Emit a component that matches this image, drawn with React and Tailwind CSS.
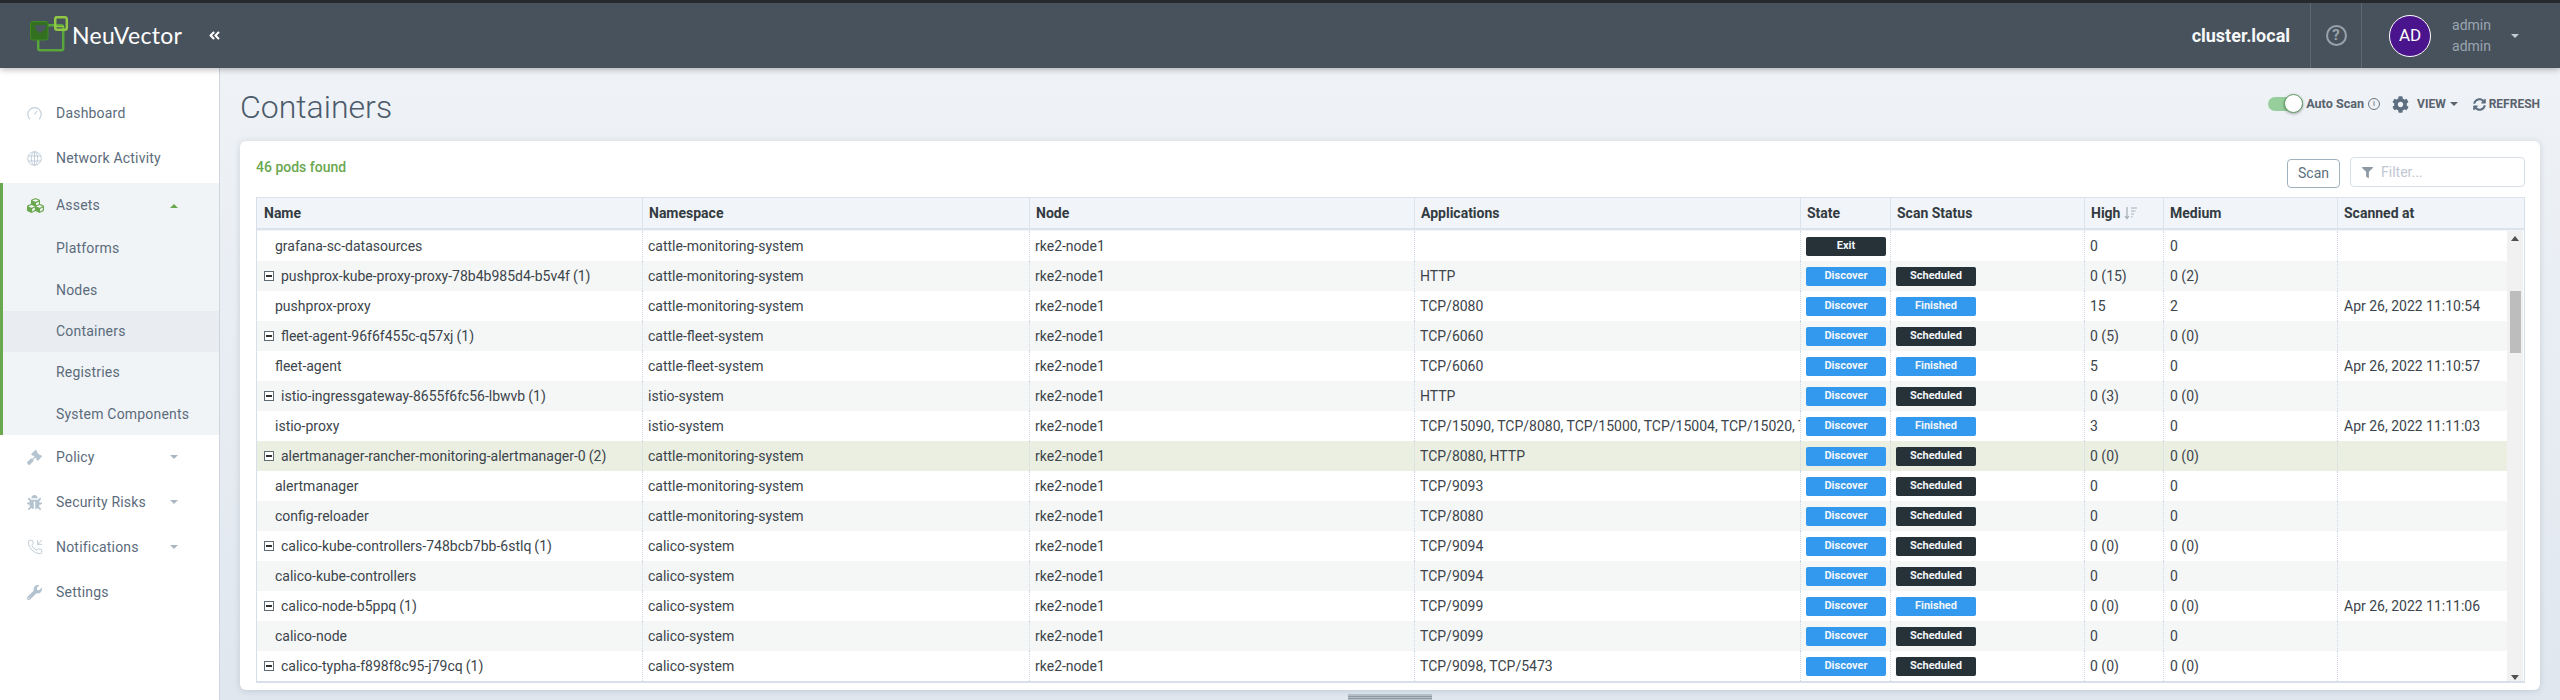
import React from "react";
import { FaCubes, FaGavel, FaBug, FaWrench, FaCog, FaSyncAlt, FaFilter, FaAngleDoubleLeft } from "react-icons/fa";
import { PhoneIncoming } from "lucide-react";

const MON = "cattle-monitoring-system";
const FLEET = "cattle-fleet-system";
const ISTIO = "istio-system";
const CAL = "calico-system";

const rows = [
  { name: "grafana-sc-datasources", ns: MON, app: "", state: "Exit", scan: "", high: "0", med: "0", at: "" },
  { name: "pushprox-kube-proxy-proxy-78b4b985d4-b5v4f", count: 1, ns: MON, app: "HTTP", state: "Discover", scan: "Scheduled", high: "0 (15)", med: "0 (2)", at: "" },
  { name: "pushprox-proxy", ns: MON, app: "TCP/8080", state: "Discover", scan: "Finished", high: "15", med: "2", at: "Apr 26, 2022 11:10:54" },
  { name: "fleet-agent-96f6f455c-q57xj", count: 1, ns: FLEET, app: "TCP/6060", state: "Discover", scan: "Scheduled", high: "0 (5)", med: "0 (0)", at: "" },
  { name: "fleet-agent", ns: FLEET, app: "TCP/6060", state: "Discover", scan: "Finished", high: "5", med: "0", at: "Apr 26, 2022 11:10:57" },
  { name: "istio-ingressgateway-8655f6fc56-lbwvb", count: 1, ns: ISTIO, app: "HTTP", state: "Discover", scan: "Scheduled", high: "0 (3)", med: "0 (0)", at: "" },
  { name: "istio-proxy", ns: ISTIO, app: "TCP/15090, TCP/8080, TCP/15000, TCP/15004, TCP/15020, TCP/15021", state: "Discover", scan: "Finished", high: "3", med: "0", at: "Apr 26, 2022 11:11:03" },
  { name: "alertmanager-rancher-monitoring-alertmanager-0", count: 2, ns: MON, app: "TCP/8080, HTTP", state: "Discover", scan: "Scheduled", high: "0 (0)", med: "0 (0)", at: "", selected: true },
  { name: "alertmanager", ns: MON, app: "TCP/9093", state: "Discover", scan: "Scheduled", high: "0", med: "0", at: "" },
  { name: "config-reloader", ns: MON, app: "TCP/8080", state: "Discover", scan: "Scheduled", high: "0", med: "0", at: "" },
  { name: "calico-kube-controllers-748bcb7bb-6stlq", count: 1, ns: CAL, app: "TCP/9094", state: "Discover", scan: "Scheduled", high: "0 (0)", med: "0 (0)", at: "" },
  { name: "calico-kube-controllers", ns: CAL, app: "TCP/9094", state: "Discover", scan: "Scheduled", high: "0", med: "0", at: "" },
  { name: "calico-node-b5ppq", count: 1, ns: CAL, app: "TCP/9099", state: "Discover", scan: "Finished", high: "0 (0)", med: "0 (0)", at: "Apr 26, 2022 11:11:06" },
  { name: "calico-node", ns: CAL, app: "TCP/9099", state: "Discover", scan: "Scheduled", high: "0", med: "0", at: "" },
  { name: "calico-typha-f898f8c95-j79cq", count: 1, ns: CAL, app: "TCP/9098, TCP/5473", state: "Discover", scan: "Scheduled", high: "0 (0)", med: "0 (0)", at: "" },
];

const COLS = "grid grid-cols-[385px_387px_385px_386px_90px_194px_79px_174px_170px]";

function Logo() {
  return (
    <svg width="40" height="36" viewBox="0 0 40 36" fill="none" className="-mt-[3px]">
      <rect x="9.2" y="9.2" width="25" height="25" rx="2" stroke="#58a63c" strokeWidth="2.5" />
      <rect x="1.500" y="5.500" width="17.500" height="18.500" rx="2" fill="#33701f" stroke="#3f8a26" />
      <path d="M6.500 9h10.500v3l-6 5.500-4.500-4.500z" fill="#4a5660" />
      <rect x="26.200" y="1.200" width="11.600" height="12.600" rx="2" stroke="#90c744" strokeWidth="2.5" />
      <path d="M25 10.500h10" stroke="#90c744" strokeWidth="1.500" />
    </svg>
  );
}

function GaugeIcon() {
  return (
    <svg width="15" height="15" viewBox="0 0 15 15" fill="none" stroke="#c3d0db" strokeWidth="1.2">
      <path d="M3 13.2A6.7 6.7 0 1 1 12 13.2" />
      <path d="M7.5 8.5L10 5" />
    </svg>
  );
}

function GlobeIcon() {
  return (
    <svg width="15" height="15" viewBox="0 0 15 15" fill="none" stroke="#c3d0db" strokeWidth="1">
      <circle cx="7.5" cy="7.5" r="6.8" />
      <ellipse cx="7.5" cy="7.5" rx="3.2" ry="6.8" />
      <path d="M1 5h13M1 10h13M7.5 1v13" />
    </svg>
  );
}

function SideItem({ icon, label, caret, active }) {
  return (
    <div className="flex h-[45px] items-center pl-[27px] pr-[41px] text-[#5b6b7b]">
      <span className="flex w-[29px] items-center text-[15px] text-[#b4c3d0]">{icon}</span>
      <span className="flex-1 text-[14px] tracking-[0.2px]">{label}</span>
      {caret && (
        <span
          className={
            active
              ? "h-0 w-0 border-x-[4px] border-b-[4px] border-x-transparent border-b-[#6aa84f]"
              : "h-0 w-0 border-x-[4px] border-t-[4px] border-x-transparent border-t-[#a9b7c4]"
          }
        />
      )}
    </div>
  );
}

function SubItem({ label, active }) {
  return (
    <div className={`flex h-[41.4px] items-center pl-[53px] text-[14px] tracking-[0.2px] text-[#5b6b7b] ${active ? "bg-[#e9edf1]" : ""}`}>
      {label}
    </div>
  );
}

function Badge({ text }) {
  if (!text) return null;
  const color = text === "Scheduled" || text === "Exit" ? "bg-[#263238]" : "bg-[#3399ee]";
  return (
    <span className={`flex h-[19px] w-[80px] items-center justify-center rounded-[2px] text-[11px] font-bold text-[#f2f6fa] ${color}`}>
      {text}
    </span>
  );
}

function Cell({ children, className = "" }) {
  return (
    <div className={`flex h-[30px] items-center overflow-hidden whitespace-nowrap border-l border-dotted border-[#cfd9e4] text-[14px] text-[#3c444b] ${className}`}>
      {children}
    </div>
  );
}

function Row({ row, index }) {
  const bg = row.selected ? "bg-[#ebefe2]" : index % 2 === 1 ? "bg-[#f5f7f7]" : "bg-white";
  return (
    <div className={`${COLS} ${bg}`}>
      <div className="flex h-[30px] items-center whitespace-nowrap text-[14px] text-[#3c444b]">
        {row.count ? (
          <>
            <span className="ml-[7px] mr-[7px] flex h-[10px] w-[10px] items-center justify-center border border-[#5f6a72] bg-white">
              <span className="h-[2px] w-[6px] bg-[#333]" />
            </span>
            {row.name}
            <span className="ml-[3px]">({row.count})</span>
          </>
        ) : (
          <span className="pl-[18px]">{row.name}</span>
        )}
      </div>
      <Cell className="pl-[5px]">{row.ns}</Cell>
      <Cell className="pl-[5px]">rke2-node1</Cell>
      <Cell className="pl-[5px]">{row.app}</Cell>
      <Cell className="pl-[5px]"><Badge text={row.state} /></Cell>
      <Cell className="pl-[5px]"><Badge text={row.scan} /></Cell>
      <Cell className="pl-[5px]">{row.high}</Cell>
      <Cell className="pl-[6px]">{row.med}</Cell>
      <Cell className="pl-[6px]">{row.at}</Cell>
    </div>
  );
}

function HeadCell({ children, first }) {
  return (
    <div className={`flex h-[30px] items-center whitespace-nowrap text-[14px] font-bold text-[#333b41] ${first ? "pl-[7px]" : "border-l border-[#dbe3ec] pl-[6px]"}`}>
      {children}
    </div>
  );
}

function SortIcon() {
  return (
    <svg width="14" height="14" viewBox="0 0 14 14" fill="none" stroke="#a4adb6" strokeWidth="1.2" className="ml-[4px]">
      <path d="M3 1v11M1 10l2 2.5L5 10" />
      <path d="M7 2h6M7 5h4.5M7 8h3M7 11h1.5" />
    </svg>
  );
}

export default function App() {
  return (
    <div className="flex h-[700px] w-[2560px] flex-col overflow-hidden bg-[#eef1f5] font-['Roboto',sans-serif]">
      <header className="relative z-10 flex h-[68px] items-stretch border-t-[3px] border-[#26292d] bg-[#48525d] shadow-[0_2px_6px_rgba(0,0,0,0.25)]">
        <div className="flex items-center pl-[29px]">
          <Logo />
          <span className="ml-[3px] font-['Lato',sans-serif] text-[23px] font-normal tracking-[0.3px] text-white">NeuVector</span>
          <FaAngleDoubleLeft className="ml-[26px] text-[13px] text-white" />
        </div>
        <div className="flex-1" />
        <div className="flex items-center pr-[20px] text-[18px] font-bold text-[#f5f7f8]">cluster.local</div>
        <div className="flex w-[52px] items-center justify-center border-x border-[#5f6974]">
          <span className="flex h-[21px] w-[21px] items-center justify-center rounded-full border-2 border-[#98a2ab] text-[15px] font-bold text-[#98a2ab]">?</span>
        </div>
        <div className="flex items-center pl-[27px]">
          <span className="flex h-[42px] w-[42px] items-center justify-center rounded-full border border-white bg-[#4a148c] text-[17px] text-white">AD</span>
          <div className="ml-[21px] flex flex-col text-[14px] leading-[21px] text-[#9aa5af]">
            <span>admin</span>
            <span>admin</span>
          </div>
          <span className="ml-[20px] mr-[41px] h-0 w-0 border-x-[4px] border-t-[4px] border-x-transparent border-t-[#c4ccd3]" />
        </div>
      </header>

      <div className="flex flex-1">
        <aside className="w-[220px] border-r border-[#cfd6dd] bg-white pt-[23px]">
          <SideItem icon={<GaugeIcon />} label="Dashboard" />
          <SideItem icon={<GlobeIcon />} label="Network Activity" />
          <div className="mt-[2px] border-l-[3px] border-[#6aa84f] bg-[#f1f4f7]">
            <div className="-ml-[3px]">
              <SideItem icon={<FaCubes className="text-[17px] text-[#6aa84f]" />} label="Assets" caret active />
            </div>
            <div className="-ml-[3px] pl-[3px]">
              <SubItem label="Platforms" />
              <SubItem label="Nodes" />
              <SubItem label="Containers" active />
              <SubItem label="Registries" />
              <SubItem label="System Components" />
            </div>
          </div>
          <SideItem icon={<FaGavel />} label="Policy" caret />
          <SideItem icon={<FaBug />} label="Security Risks" caret />
          <SideItem icon={<PhoneIncoming size={16} strokeWidth={1.3} />} label="Notifications" caret />
          <SideItem icon={<FaWrench />} label="Settings" />
        </aside>

        <main className="flex flex-1 flex-col bg-gradient-to-b from-[#eff2f6] to-[#e0e7ef] px-[20px]">
          <div className="flex h-[73px] items-center justify-between">
            <h1 className="mt-[4px] text-[32px] font-light text-[#4c5b6b]">Containers</h1>
            <div className="flex items-center text-[12px] font-bold text-[#59636e]">
              <span className="relative mr-[3px] h-[14px] w-[35px] rounded-full bg-[#97cf9c]">
                <span className="absolute -top-[3px] right-0 h-[19px] w-[19px] rounded-full border border-[#5f9d63] bg-white shadow-[0_1px_3px_rgba(0,0,0,0.35)]" />
              </span>
              <span className="text-[12.600px]">Auto Scan</span>
              <span className="ml-[4px] flex h-[12px] w-[12px] items-center justify-center rounded-full border border-[#6d7780] text-[8px] font-normal">i</span>
              <FaCog className="ml-[12px] text-[17px] text-[#5d6e80]" />
              <span className="ml-[8px]">VIEW</span>
              <span className="ml-[4px] h-0 w-0 border-x-[4px] border-t-[4px] border-x-transparent border-t-[#59636e]" />
              <FaSyncAlt className="ml-[15px] text-[13px] text-[#5d6e80]" />
              <span className="ml-[3px]">REFRESH</span>
            </div>
          </div>

          <section className="h-[549px] rounded-[6px] bg-white pl-[16px] pr-[15px] shadow-[0_1px_6px_rgba(90,110,130,0.25)]">
            <div className="flex h-[56px] items-center">
              <span className="-mt-[4px] flex-1 text-[14px] font-medium text-[#6aa84f]">46 pods found</span>
              <button className="mt-[8px] h-[29px] w-[53px] rounded-[4px] border border-[#9fb2c0] text-[14px] text-[#5c6f7e]">Scan</button>
              <div className="ml-[10px] mt-[6px] flex h-[30px] w-[175px] items-center rounded-[4px] border border-[#d7e0e8] pl-[11px] text-[14px] text-[#c0c8d4]">
                <FaFilter className="mr-[8px] text-[11px] text-[#8e99a4]" />
                Filter...
              </div>
            </div>

            <div className="border-x border-b-2 border-[#d7e0ea]">
              <div className={`${COLS} border-t border-b-2 border-[#dbe3ec] bg-[#f1f4f8]`}>
                <HeadCell first>Name</HeadCell>
                <HeadCell>Namespace</HeadCell>
                <HeadCell>Node</HeadCell>
                <HeadCell>Applications</HeadCell>
                <HeadCell>State</HeadCell>
                <HeadCell>Scan Status</HeadCell>
                <HeadCell>High<SortIcon /></HeadCell>
                <HeadCell>Medium</HeadCell>
                <HeadCell>Scanned at</HeadCell>
              </div>
              <div className="h-px bg-[#f1f4f8]" />
              <div className="flex">
                <div className="w-[2250px]">
                  {rows.map((row, i) => (
                    <Row key={row.name} row={row} index={i} />
                  ))}
                </div>
                <div className="flex w-[16px] flex-col items-center bg-[#f1f1f1]">
                  <span className="mt-[5px] h-0 w-0 border-x-[4px] border-b-[5px] border-x-transparent border-b-[#505050]" />
                  <span className="mt-[50px] h-[62px] w-[11px] bg-[#bdbdbd]" />
                  <span className="mt-[322px] h-0 w-0 border-x-[4px] border-t-[5px] border-x-transparent border-t-[#505050]" />
                </div>
              </div>
            </div>
          </section>

          <div className="mt-[4px] flex justify-center">
            <div className="flex h-[6px] w-[84px] flex-col justify-between bg-[#b4bec6]">
              <span className="mt-[2px] h-px bg-[#8f9ba4]" />
              <span className="mb-[1px] h-px bg-[#8f9ba4]" />
            </div>
          </div>
        </main>
      </div>
    </div>
  );
}
